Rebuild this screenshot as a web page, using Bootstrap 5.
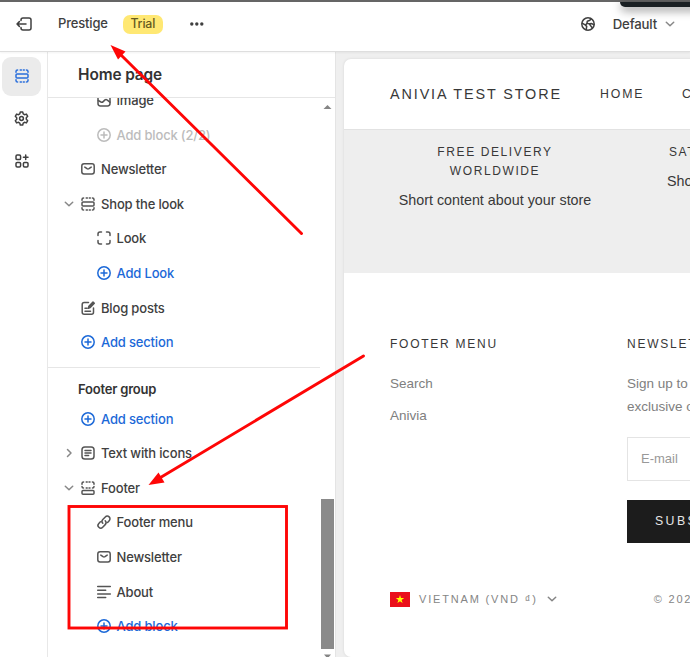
<!DOCTYPE html>
<html lang="en">
<head>
<meta charset="utf-8">
<meta name="viewport" content="width=device-width, initial-scale=1">
<title>Theme editor</title>
<link href="https://cdn.jsdelivr.net/npm/bootstrap@5.3.0/dist/css/bootstrap.min.css" rel="stylesheet">
<style>
body{width:690px;height:657px;font-family:Inter,"Liberation Sans",sans-serif;font-size:13px;font-weight:450;letter-spacing:-.17px;line-height:18px;color:#404040;background:#fff}
svg{flex:none;display:block;fill:none;stroke:currentColor;stroke-width:1.5;stroke-linecap:round;stroke-linejoin:round;overflow:visible}
.topbar{height:52px;border-top:2px solid #656565;border-bottom:1px solid #dedede;padding:0 14px 5px 16px;box-shadow:0 1px 2px #0000000d;z-index:2}
.prestige{margin:-2px 0 0 26px}
.trial{background:#ffe873;color:#655a20;border-radius:7px;width:40px;height:19px;font-size:12.4px;margin-left:15px}
.dots{margin-left:27px}
.globe{margin-left:auto}
.locale{margin-left:18px;font-size:13.2px}
.loc-chev{margin-left:6px;margin-right:-1px;color:#888}
.dark-tab{left:620px;top:0;width:90px;height:5px;background:#1a2023;border-bottom-left-radius:7px;box-shadow:0 3px 10px #0008}
.rail{width:48px;border-right:1px solid #e8e8e8;padding-top:5px}
.rail-btn{width:39px;height:39px;border-radius:9px;margin:0 0 3.3px 2px}
.rail-btn.active{background:#ebebeb;color:#2a6fdc}
.rail-btn svg{margin-top:-1px}
.side{width:288px;border-right:1px solid #e4e4e4}
.side-title{height:46px;border-bottom:1px solid #e6e6e6;padding-left:30px;font-size:15.4px;font-weight:600;color:#333;letter-spacing:-.1px}
.tree{margin-top:-15.2px}
.item{height:34.6px;padding-left:14px}
.item .chev{width:14px;margin-right:5px;color:#888}
.item .ico{width:14px;margin-right:6px;color:#555}
.item.sub{padding-left:29.5px}
.item.add,.item.add .ico{color:#1c69d8}
.item.off,.item.off .ico{color:#bcbcbc}
.group-title{border-top:1px solid #e6e6e6;margin-top:7px;height:34.7px;width:272px;padding:12px 0 0 30px;font-weight:600;color:#333;letter-spacing:-.2px}
.scroll{width:14px;padding-top:6px}
.thumb{width:13px;height:150px;background:#8a8a8a}
.canvas{background:#efefef;padding:7px 0 0 8px;min-width:0}
.shop{border-radius:7px 0 0 7px;background:#fff;width:700px;height:598px;font-family:"Liberation Sans",Arial,sans-serif;font-weight:400;letter-spacing:0;color:#383838;box-shadow:0 0 3px #0000001c}
.shop-head{height:71px;border-bottom:1px solid #e2e2e2;padding-left:46px;text-transform:uppercase}
.brand{font-size:14.4px;letter-spacing:1.88px;width:210px}
.menu-link{font-size:12.3px;letter-spacing:1.85px}
.menu-home{width:82px}
.perks{height:143px;background:#eee;padding-top:13px}
.perk-title{font-size:12px;letter-spacing:1.6px;line-height:19px}
.perk-text{font-size:14.3px;letter-spacing:.01px;line-height:20px;margin-top:9px}
.perk-a{width:210px;margin-left:46px}
.perk-b{margin-left:67px}
.perk-b .perk-title{margin-left:2px}
.foot{padding:62px 0 0 46px}
.foot-title{font-size:12px;letter-spacing:1.75px;line-height:18px}
.foot-copy{color:#808080;font-size:13.5px;line-height:22.5px}
.col-menu{width:237px}
.link-one{margin-top:20px}
.link-two{margin-top:9px}
.mail{height:44px;width:180px;border:1px solid #e4e4e4;padding-left:13px;color:#999;margin-top:19px}
.sub-btn{height:43px;width:180px;background:#1c1c1c;color:#e6e6e6;letter-spacing:2.4px;font-size:12.3px;padding:0 0 2px 28px;margin-top:19px}
.legal{color:#858585;font-size:11px;letter-spacing:1.83px;margin-top:47px}
.country{margin:0 7px 0 9px}
.copyr{margin-left:95px}
.notes{left:0;top:0;z-index:5;stroke:none}
</style>
</head>
<body class="position-relative overflow-hidden">
<svg class="d-none">
<symbol id="sect" viewBox="0 0 14 14"><path d="M1 3.2V2.6Q1 1 2.6 1M5.2 1h1.2M8.3 1h1M11.4 1Q13 1 13 2.6V3.2M1 10.8v.6Q1 13 2.6 13M5.2 13h1.2M8.3 13h1M11.4 13Q13 13 13 11.4v-.6"/><rect x="1" y="4.9" width="12" height="4.2" rx="1"/></symbol>
<symbol id="plus" viewBox="0 0 14 14"><circle cx="7" cy="7" r="6.2"/><path d="M7 4v6M4 7h6"/></symbol>
<symbol id="mail" viewBox="0 0 14 14"><rect x=".8" y="1.8" width="12.4" height="10.2" rx="2.2"/><path d="M3.8 5.1l2.2 1.5q1 .6 2 0l2.2-1.5"/></symbol>
<symbol id="down" viewBox="0 0 14 14"><path d="M3.3 5.2L7 8.8l3.700-3.600"/></symbol>
</svg>
<div class="d-flex flex-column h-100">
<header class="topbar d-flex align-items-center position-relative bg-white">
  <svg width="16" height="14" viewBox="0 0 16 14"><path d="M5 3.600V3Q5 1 7 1h6q2 0 2 2v8q0 2-2 2H7q-2 0-2-2v-.6M10 7H1M3.400 4.600L1 7l2.400 2.400"/></svg>
  <span class="prestige">Prestige</span>
  <span class="trial d-flex align-items-center justify-content-center">Trial</span>
  <svg class="dots" width="15" height="4" viewBox="0 0 15 4"><g fill="currentColor" stroke="none"><circle cx="1.800" cy="2" r="1.700"/><circle cx="6.800" cy="2" r="1.700"/><circle cx="11.800" cy="2" r="1.700"/></g></svg>
  <svg class="globe" width="14" height="14" viewBox="0 0 14 14"><circle cx="7" cy="7" r="6.200"/><path d="M1.200 6.200l3.300 2 1.200 1.200-.5 3.300M9.800 1.500L9 3.200 6.300 4.200l-.3 2 2.200.7M8.200 6.900l3 3.900M8.200 6.900l2-.5 2.800 1.300M4.500 8.200L6 6.200"/></svg>
  <span class="locale">Default</span>
  <svg width="14" height="14" class="loc-chev"><use href="#down"/></svg>
  <div class="dark-tab position-absolute"></div>
</header>
<div class="d-flex flex-grow-1 overflow-hidden">
  <nav class="rail flex-shrink-0">
    <div class="rail-btn active d-flex align-items-center justify-content-center"><svg width="14" height="14"><use href="#sect"/></svg></div>
    <div class="rail-btn d-flex align-items-center justify-content-center"><svg width="15" height="15" viewBox="0 0 15 15"><path d="M6.3 1h2.4l.5 1.9 1.3.8 1.9-.6 1.300 2.200-1.400 1.400v1.600l1.400 1.400-1.300 2.200-1.900-.6-1.300.8-.5 1.900H6.300l-.5-1.900-1.300-.8-1.900.6-1.300-2.200 1.400-1.400V6.700L1.300 5.300l1.300-2.200 1.900.6 1.300-.8z"/><circle cx="7.500" cy="7.500" r="1.900"/></svg></div>
    <div class="rail-btn d-flex align-items-center justify-content-center"><svg width="14" height="14" viewBox="0 0 14 14"><rect x="1" y="1" width="4.600" height="4.600" rx="1.200"/><rect x="1" y="8.400" width="4.600" height="4.600" rx="1.200"/><rect x="8.400" y="8.400" width="4.600" height="4.600" rx="1.200"/><path d="M10.700 1v4.600M8.400 3.300H13"/></svg></div>
  </nav>
  <aside class="side flex-shrink-0 d-flex flex-column">
    <div class="side-title d-flex align-items-center flex-shrink-0">Home page</div>
    <div class="d-flex flex-grow-1 overflow-hidden">
      <div class="tree flex-shrink-0">
        <div class="item sub d-flex align-items-center"><span class="chev"></span><svg class="ico" height="14" viewBox="0 0 14 14"><rect x="1" y="1" width="12" height="12" rx="2.400"/><path d="M1.200 7.500l2.800 1.500q1.200.6 2.200-.4l1.800-1.700q1-.9 2 0l2.900 2.300"/></svg>Image</div>
        <div class="item sub off d-flex align-items-center"><span class="chev"></span><svg class="ico" height="14"><use href="#plus"/></svg>Add block (2/2)</div>
        <div class="item d-flex align-items-center"><span class="chev"></span><svg class="ico" height="14"><use href="#mail"/></svg>Newsletter</div>
        <div class="item d-flex align-items-center"><svg class="chev" height="14"><use href="#down"/></svg><svg class="ico" height="14"><use href="#sect"/></svg>Shop the look</div>
        <div class="item sub d-flex align-items-center"><span class="chev"></span><svg class="ico" height="14" viewBox="0 0 14 14"><path d="M1 4.500V3q0-2 2-2h1.500M9.500 1H11q2 0 2 2v1.500M13 9.500V11q0 2-2 2H9.500M4.500 13H3q-2 0-2-2V9.500"/></svg>Look</div>
        <div class="item sub add d-flex align-items-center"><span class="chev"></span><svg class="ico" height="14"><use href="#plus"/></svg>Add Look</div>
        <div class="item d-flex align-items-center"><span class="chev"></span><svg class="ico" height="14" viewBox="0 0 14 14"><path d="M7.500 1.500H3.200q-2 0-2 2v7.800q0 2 2 2h7.300q2 0 2-2V7M4 7.300h2M4 10.300h5.500M7.400 7.200l.5-2L12 1.100l1.300 1.200-4.100 4.300zM8.400 6.100l4-4"/></svg>Blog posts</div>
        <div class="item add d-flex align-items-center"><span class="chev"></span><svg class="ico" height="14"><use href="#plus"/></svg>Add section</div>
        <div class="group-title">Footer group</div>
        <div class="item add d-flex align-items-center"><span class="chev"></span><svg class="ico" height="14"><use href="#plus"/></svg>Add section</div>
        <div class="item d-flex align-items-center"><svg class="chev" height="14" viewBox="0 0 14 14"><path d="M5.500 3.500L9 7l-3.500 3.500"/></svg><svg class="ico" height="14" viewBox="0 0 14 14"><rect x="1" y="1" width="12" height="12" rx="2.800"/><path d="M4 4.400h6M4 7h6M4 9.600h3.600"/></svg>Text with icons</div>
        <div class="item d-flex align-items-center"><svg class="chev" height="14"><use href="#down"/></svg><svg class="ico" height="14" viewBox="0 0 14 14"><rect x="1" y="9.600" width="12" height="3.600" rx="1"/><path d="M1 3.200V2.600Q1 1 2.600 1M5.200 1h1M8 1h1M11.400 1Q13 1 13 2.600v.6M1 5.600q0 1.500 1.500 1.500M5.200 7.100h1M8 7.100h1M13 5.600q0 1.500-1.500 1.500"/></svg>Footer</div>
        <div class="item sub d-flex align-items-center"><span class="chev"></span><svg class="ico" height="14" viewBox="0 0 14 14"><path d="M5.800 8.300a2.700 2.700 0 0 1 0-3.800l2.500-2.600a2.700 2.700 0 0 1 3.900 3.800l-1.600 1.700M8.200 5.800a2.700 2.700 0 0 1 0 3.800l-2.500 2.600a2.700 2.700 0 0 1-3.900-3.800l1.600-1.700"/></svg>Footer menu</div>
        <div class="item sub d-flex align-items-center"><span class="chev"></span><svg class="ico" height="14"><use href="#mail"/></svg>Newsletter</div>
        <div class="item sub d-flex align-items-center"><span class="chev"></span><svg class="ico" height="14" viewBox="0 0 14 14"><path d="M.7 1.500h12.600M.7 5.200h8M.7 8.900h12.600M.7 12.600h8"/></svg>About</div>
        <div class="item sub add d-flex align-items-center"><span class="chev"></span><svg class="ico" height="14"><use href="#plus"/></svg>Add block</div>
      </div>
      <div class="scroll ms-auto flex-shrink-0 d-flex flex-column">
        <svg width="13" height="6" viewBox="0 0 13 6"><path d="M2.500 5l4-4 4 4z" fill="#858585" stroke="none"/></svg>
        <div class="thumb mt-auto"></div>
        <svg width="13" height="8" viewBox="0 0 13 8"><path d="M3 5.500h7L6.500 9.500z" fill="#858585" stroke="none"/></svg>
      </div>
    </div>
  </aside>
  <main class="canvas flex-grow-1 overflow-hidden">
    <div class="shop overflow-hidden">
      <div class="shop-head d-flex align-items-center">
        <div class="brand text-nowrap">Anivia Test Store</div><div class="menu-link menu-home">Home</div><div class="menu-link">Catalog</div>
      </div>
      <div class="perks d-flex">
        <div class="perk-a text-center"><div class="perk-title">FREE DELIVERY<br>WORLDWIDE</div><div class="perk-text">Short content about your store</div></div>
        <div class="perk-b text-nowrap"><div class="perk-title">SATISFIED OR REFUNDED</div><div class="perk-text">Short content about your store</div></div>
      </div>
      <div class="foot">
        <div class="d-flex">
          <div class="col-menu flex-shrink-0"><div class="foot-title">FOOTER MENU</div>
            <div class="foot-copy link-one">Search</div><div class="foot-copy link-two">Anivia</div></div>
          <div class="text-nowrap"><div class="foot-title">NEWSLETTER</div>
            <div class="foot-copy link-one">Sign up to receive<br>exclusive offers</div>
            <div class="mail d-flex align-items-center">E-mail</div>
            <div class="sub-btn d-flex align-items-center">SUBSCRIBE</div></div>
        </div>
        <div class="legal d-flex align-items-center">
          <svg width="20" height="15" viewBox="0 0 20 15"><g stroke="none"><path fill="#ea0f1b" d="M0 0h20v15H0z"/><path fill="#ff0" d="M10 3.100l1 3h3.200l-2.600 1.900 1 3.100L10 9.200l-2.600 1.900 1-3.100-2.600-1.900H9z"/></g></svg>
          <span class="country">VIETNAM (VND ₫)</span>
          <svg width="14" height="14"><use href="#down"/></svg>
          <span class="copyr text-nowrap">© 2024 Anivia test store</span>
        </div>
      </div>
    </div>
  </main>
</div>
</div>
<svg class="notes position-absolute" width="690" height="657" viewBox="0 0 690 657">
<g fill="#fe0606"><path d="M110.500 45l15 6.500-7.500 8z"/><path d="M148.500 485l10-12.500 6 10z"/></g>
<g stroke="#fe0606" stroke-width="2.900"><path d="M120 54L301.500 233.500M158 479L363.500 356"/><rect x="69" y="506.500" width="217.500" height="121.500" stroke-linejoin="miter"/></g>
</svg>
<script src="https://cdn.jsdelivr.net/npm/bootstrap@5.3.0/dist/js/bootstrap.bundle.min.js"></script>
</body>
</html>
